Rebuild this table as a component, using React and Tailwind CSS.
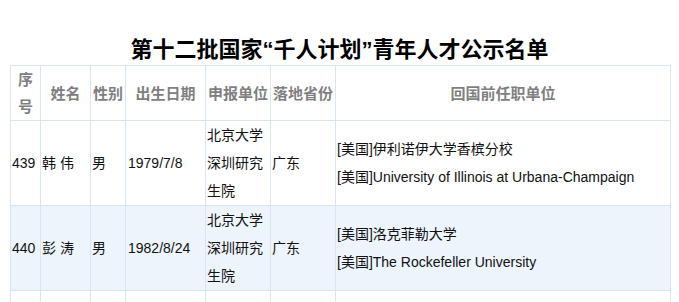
import React from "react";

const rows = [
  {
    no: "439",
    name: "韩 伟",
    sex: "男",
    birth: "1979/7/8",
    unit: "北京大学深圳研究生院",
    prov: "广东",
    prev: ["伊利诺伊大学香槟分校", "University of Illinois at Urbana-Champaign"],
  },
  {
    no: "440",
    name: "彭 涛",
    sex: "男",
    birth: "1982/8/24",
    unit: "北京大学深圳研究生院",
    prov: "广东",
    prev: ["洛克菲勒大学", "The Rockefeller University"],
    shaded: true,
  },
];

const heads = ["序号", "姓名", "性别", "出生日期", "申报单位", "落地省份", "回国前任职单位"];

export default function App() {
  return (
    <div className="bg-white min-h-[302px] pt-[35px] font-['Liberation_Sans','Noto_Sans_CJK_SC',sans-serif]">
      <h1 className="text-center text-[22px] leading-[30px] font-bold text-black">
        第十二批国家“千人计划”青年人才公示名单
      </h1>

      <table className="ml-[10px] w-[660px] table-fixed border-collapse text-[14px] leading-[28px] text-[#111]">
        <colgroup>
          <col className="w-[30px]" />
          <col className="w-[50px]" />
          <col className="w-[35px]" />
          <col className="w-[80px]" />
          <col className="w-[65px]" />
          <col className="w-[65px]" />
          <col className="w-[335px]" />
        </colgroup>
        <thead>
          <tr className="h-[54px]">
            {heads.map((h) => (
              <th
                key={h}
                className="border border-[#d6e6f3] px-0 text-[15px] leading-[27px] font-bold text-[#7f7f7f] text-center align-middle"
              >
                {h}
              </th>
            ))}
          </tr>
        </thead>
        <tbody>
          {rows.map((r) => (
            <tr key={r.no} className={r.shaded ? "h-[85px] bg-[#edf4fb]" : "h-[85px]"}>
              <td className="border border-[#d6e6f3] pl-[1px] align-middle">{r.no}</td>
              <td className="border border-[#d6e6f3] pl-[1px] align-middle">{r.name}</td>
              <td className="border border-[#d6e6f3] pl-[1px] align-middle">{r.sex}</td>
              <td className="border border-[#d6e6f3] pl-[2px] align-middle">{r.birth}</td>
              <td className="border border-[#d6e6f3] pl-[1px] align-middle">{r.unit}</td>
              <td className="border border-[#d6e6f3] pl-[1px] align-middle">{r.prov}</td>
              <td className="border border-[#d6e6f3] pl-[1px] align-middle">
                {r.prev.map((p) => (
                  <div key={p}>[美国]{p}</div>
                ))}
              </td>
            </tr>
          ))}
          <tr className="h-[85px]">
            {heads.map((h) => (
              <td key={h} className="border border-[#d6e6f3]"></td>
            ))}
          </tr>
        </tbody>
      </table>
    </div>
  );
}
